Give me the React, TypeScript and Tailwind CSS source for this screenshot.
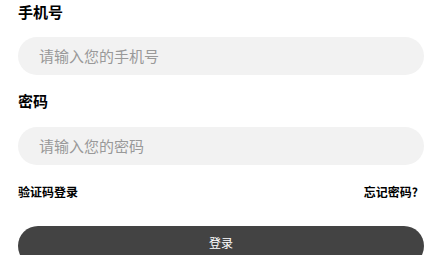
import React from "react";

export default function App() {
  return (
    <div
      className="w-[442px] h-[255px] overflow-hidden bg-white px-[18px] pt-[2px]"
      style={{ fontFamily: '"Noto Sans CJK SC", "Noto Sans", sans-serif' }}
    >
      <div className="text-[15px] leading-[20px] font-bold text-black">手机号</div>
      <div className="mt-[15px] h-[38px] rounded-full bg-[#f2f2f2] flex items-center px-[21px]">
        <input
          className="w-full bg-transparent outline-none text-[15px] text-black placeholder:text-[#999999]"
          placeholder="请输入您的手机号"
        />
      </div>
      <div className="mt-[16px] text-[15px] leading-[20px] font-bold text-black">密码</div>
      <div className="mt-[16px] h-[38px] rounded-full bg-[#f2f2f2] flex items-center px-[21px]">
        <input
          type="password"
          className="w-full bg-transparent outline-none text-[15px] text-black placeholder:text-[#999999]"
          placeholder="请输入您的密码"
        />
      </div>
      <div className="mt-[19px] flex justify-between items-center text-[12px] leading-[16px] font-bold text-black pr-[6px]">
        <span>验证码登录</span>
        <span>忘记密码?</span>
      </div>
      <button className="mt-[26px] w-full h-[40px] rounded-full bg-[#434343] text-white text-[12px] flex items-center justify-center pb-[6px]">
        登录
      </button>
    </div>
  );
}
